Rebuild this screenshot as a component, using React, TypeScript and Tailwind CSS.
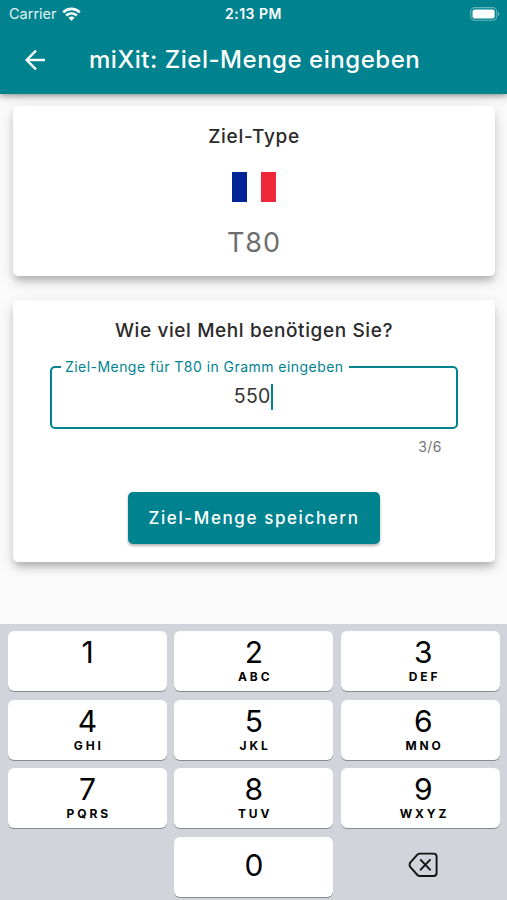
import React from "react";

const KEYS: { digit: string; letters: string }[] = [
  { digit: "1", letters: "" },
  { digit: "2", letters: "ABC" },
  { digit: "3", letters: "DEF" },
  { digit: "4", letters: "GHI" },
  { digit: "5", letters: "JKL" },
  { digit: "6", letters: "MNO" },
  { digit: "7", letters: "PQRS" },
  { digit: "8", letters: "TUV" },
  { digit: "9", letters: "WXYZ" },
];

function WifiIcon() {
  return (
    <svg width="19" height="15" viewBox="0 0 19 15" fill="none" stroke="#fff" strokeWidth="2.7">
      <path d="M1.2 5.4C5.9 .8 13.1 .8 17.8 5.4" />
      <path d="M4.2 8.6C7.3 5.8 11.7 5.8 14.8 8.6" />
      <path d="M9.5 13.8L6.4 10.8C8.2 9.1 10.8 9.1 12.6 10.8Z" fill="#fff" stroke="none" />
    </svg>
  );
}

function BatteryIcon() {
  return (
    <svg width="30" height="15" viewBox="0 0 30 15" fill="none">
      <rect x="0.7" y="0.6" width="26" height="12.6" rx="4" stroke="#fff" strokeOpacity="0.4" strokeWidth="1.1" />
      <rect x="2.5" y="2.4" width="22.2" height="9" rx="2.2" fill="#fff" />
      <path d="M28 5C29.6 5.6 29.6 8.4 28 9Z" fill="#fff" fillOpacity="0.5" />
    </svg>
  );
}

function BackArrow() {
  return (
    <svg width="22" height="22" viewBox="0 0 22 22" fill="none" stroke="#fff" strokeWidth="2.4">
      <path d="M21 11H3" />
      <path d="M12 1.7L2.7 11L12 20.3" />
    </svg>
  );
}

function DeleteIcon() {
  return (
    <svg width="30" height="26" viewBox="0 0 30 26" fill="none" stroke="#111" strokeWidth="1.9" strokeLinecap="round" strokeLinejoin="round">
      <path d="M11.8 1.6H25.6Q28.6 1.6 28.6 4.6V21Q28.6 24 25.6 24H11.8Q10.4 24 9.4 23L2.2 14.9Q.9 12.8 2.2 10.7L9.4 2.6Q10.4 1.6 11.8 1.6Z" />
      <path d="M12.7 7.9L22 17.7M22 7.9L12.7 17.7" />
    </svg>
  );
}

function Key({ digit, letters }: { digit: string; letters: string }) {
  return (
    <div className="flex h-[60px] flex-col items-center rounded-[6px] bg-white pt-[4px] text-black shadow-[0_1px_0_#898a8d] nth-[3n]:pl-[6px]">
      <span className="text-[30px] leading-[34px]">{digit}</span>
      {letters && (
        <span className="mt-px mr-[-2.6px] text-[12px] leading-[14px] font-bold tracking-[2.9px]">{letters}</span>
      )}
    </div>
  );
}

export default function App() {
  return (
    <div className="flex h-[900px] w-[507px] flex-col overflow-hidden bg-[#fafafa] font-['Inter',sans-serif]">
      <header className="relative h-[94px] shrink-0 bg-[#00838f] text-white shadow-[0_2px_5px_rgba(0,0,0,0.3),0_3px_10px_rgba(0,0,0,0.12)]">
        <div className="grid h-7 grid-cols-3 items-center pr-[7px] pl-[7px] text-[14.5px] leading-7">
          <div className="flex items-center gap-[5px] pl-[2px]">
            <span className="text-white/90">Carrier</span>
            <WifiIcon />
          </div>
          <span className="text-center text-[14px] font-semibold tracking-[0.5px]">2:13 PM</span>
          <div className="flex justify-end">
            <BatteryIcon />
          </div>
        </div>
        <div className="flex h-16 items-center pl-[24px]">
          <BackArrow />
          <h1 className="ml-[43px] text-[24px] leading-8 font-medium tracking-[0.53px] whitespace-nowrap">miXit: Ziel-Menge eingeben</h1>
        </div>
      </header>

      <main className="flex flex-1 flex-col gap-[24px] px-[13px] pt-[12px]">
        <section className="flex h-[170px] w-[482px] flex-col items-center rounded-[5px] bg-white pt-[17px] shadow-[0_6px_7px_-2px_rgba(0,0,0,0.2),0_5px_14px_rgba(0,0,0,0.15)]">
          <h2 className="text-[19px] leading-7 font-medium tracking-[0.7px] text-[#2a2a2a]">Ziel-Type</h2>
          <div className="mt-[21px] flex h-[30px] w-[44px] justify-between">
            <div className="w-[15px] bg-[#002395]" />
            <div className="w-[15px] bg-[#ed2939]" />
          </div>
          <p className="mt-[23px] text-[27px] leading-9 tracking-[1px] text-[#6d6d6d]">T80</p>
        </section>

        <section className="flex h-[262px] w-[482px] flex-col rounded-[5px] bg-white px-[37px] pt-[17px] shadow-[0_6px_7px_-2px_rgba(0,0,0,0.2),0_5px_14px_rgba(0,0,0,0.15)]">
          <h2 className="text-center text-[19px] leading-7 font-medium tracking-[0.6px] whitespace-nowrap text-[#2a2a2a]">Wie viel Mehl benötigen Sie?</h2>
          <fieldset className="mt-[13px] h-[71px] w-[408px] rounded-[5px] border-[2.5px] border-[#00838f] pl-[9px]">
            <legend className="h-[18px] w-[288px] pl-1 text-[14px] leading-[18px] tracking-[0.45px] whitespace-nowrap text-[#00838f]">
              Ziel-Menge für T80 in Gramm eingeben
            </legend>
            <div className="mt-[8px] flex h-[26px] items-center justify-center pr-[10px] text-[19.5px] tracking-[0.3px] text-[#333]">
              <span>550</span>
              <span className="h-[26px] w-[2.5px] bg-[#00838f]" />
            </div>
          </fieldset>
          <p className="mt-[8px] pr-[16px] text-right text-[14px] leading-5 tracking-[0.5px] text-[#747474]">3/6</p>
          <button className="mt-[35px] ml-[78px] h-[52px] w-[252px] rounded-[5px] bg-[#00838f] pt-px text-[17px] font-medium tracking-[1.6px] whitespace-nowrap text-white shadow-[0_2px_3px_rgba(0,0,0,0.3)]">
            Ziel-Menge speichern
          </button>
        </section>
      </main>

      <footer className="grid h-[276px] shrink-0 auto-rows-[60px] grid-cols-[159px_159px_159px] gap-x-[7.4px] gap-y-[8.6px] bg-[#d1d4db] px-[8px] pt-[7px]">
        {KEYS.map((key) => (
          <Key key={key.digit} {...key} />
        ))}
        <div className="col-start-2 flex h-[60px] items-center justify-center rounded-[6px] bg-white pb-[2px] text-[30px] text-black shadow-[0_1px_0_#898a8d]">
          0
        </div>
        <div className="flex items-center justify-center pb-[3px] pl-[6px]">
          <DeleteIcon />
        </div>
      </footer>
    </div>
  );
}
